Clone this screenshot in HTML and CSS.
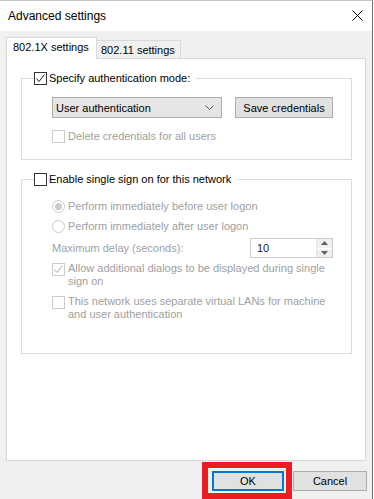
FILE: index.html
```html
<!DOCTYPE html>
<html lang="en">
<head>
    <meta charset="UTF-8">
    <title>Advanced settings</title>
    <link rel="stylesheet" href="styles.css">
</head>
<body>
    <div class="window">
        <div class="titlebar">
            <span class="title">Advanced settings</span>
            <svg class="close" width="11" height="11" viewBox="0 0 11 11">
                <path d="M0.5 0.5 L10.5 10.5 M10.5 0.5 L0.5 10.5" stroke="#000" stroke-width="1" fill="none"/>
            </svg>
        </div>
        <div class="content">
            <div class="tabs">
                <div class="tab active">802.1X settings</div>
                <div class="tab">802.11 settings</div>
            </div>
            <div class="panel">
                <fieldset class="group group-auth">
                    <legend class="legend">
                        <span class="check">
                            <svg width="11" height="11" viewBox="0 0 11 11"><path d="M1.5 5.5 L4 8.5 L9.5 1.5" stroke="#222" stroke-width="1" fill="none"/></svg>
                        </span>
                        <span class="legend-text">Specify authentication mode:</span>
                    </legend>
                    <div class="row mode-row">
                        <div class="combo">
                            <span>User authentication</span>
                            <svg width="9" height="5" viewBox="0 0 9 5"><path d="M0.5 0.5 L4.5 4.5 L8.5 0.5" stroke="#555" stroke-width="1" fill="none"/></svg>
                        </div>
                        <div class="btn save">Save credentials</div>
                    </div>
                    <div class="row opt delete-row">
                        <span class="check disabled"></span>
                        <span class="label">Delete credentials for all users</span>
                    </div>
                </fieldset>

                <fieldset class="group group-sso">
                    <legend class="legend">
                        <span class="check"></span>
                        <span class="legend-text">Enable single sign on for this network</span>
                    </legend>
                    <div class="row opt radio-first">
                        <span class="radio selected"></span>
                        <span class="label">Perform immediately before user logon</span>
                    </div>
                    <div class="row opt radio-second">
                        <span class="radio"></span>
                        <span class="label">Perform immediately after user logon</span>
                    </div>
                    <div class="row delay-row">
                        <span class="label">Maximum delay (seconds):</span>
                        <div class="spin">
                            <span class="spin-value">10</span>
                            <div class="spin-arrows">
                                <span class="arrow"><svg width="7" height="4" viewBox="0 0 7 4"><path d="M0 4 L3.5 0 L7 4 Z" fill="#606060"/></svg></span>
                                <span class="arrow"><svg width="7" height="4" viewBox="0 0 7 4"><path d="M0 0 L3.5 4 L7 0 Z" fill="#606060"/></svg></span>
                            </div>
                        </div>
                    </div>
                    <div class="row multi allow-row">
                        <span class="check disabled">
                            <svg width="11" height="11" viewBox="0 0 11 11"><path d="M1.5 5.5 L4 8.5 L9.5 1.5" stroke="#a8a8a8" stroke-width="1" fill="none"/></svg>
                        </span>
                        <span class="label">Allow additional dialogs to be displayed during single<br>sign on</span>
                    </div>
                    <div class="row multi vlan-row">
                        <span class="check disabled"></span>
                        <span class="label">This network uses separate virtual LANs for machine<br>and user authentication</span>
                    </div>
                </fieldset>
            </div>
            <div class="footer">
                <div class="highlight">
                    <div class="btn ok">OK</div>
                </div>
                <div class="btn cancel">Cancel</div>
            </div>
        </div>
    </div>
</body>
</html>
```

FILE: styles.css
```css
body {
    margin: 0;
    width: 374px;
    height: 499px;
    overflow: hidden;
    background: #fff;
    font-family: "Liberation Sans", Arial, sans-serif;
    font-size: 11px;
    color: #000;
}
.window {
    width: 372px;
    height: 498px;
    border-top: 1px solid #c4c4c4;
    border-right: 1px solid #6f6f6f;
    display: flex;
    flex-direction: column;
}
.titlebar {
    height: 31px;
    background: #fff;
    display: flex;
    align-items: center;
    justify-content: space-between;
    padding: 0 9px 0 8px;
}
.title {
    font-size: 12px;
}
.close {
    margin-top: -2px;
}
.content {
    flex: 1;
    background: #f0f0f0;
    padding: 6px 0 0 6px;
    display: flex;
    flex-direction: column;
}
.tabs {
    display: flex;
    align-items: flex-end;
    height: 21px;
}
.tab {
    box-sizing: border-box;
    height: 18px;
    line-height: 18px;
    border: 1px solid #d9d9d9;
    border-bottom: none;
    border-left: none;
    padding: 0 0 0 4px;
    width: 84px;
    white-space: nowrap;
    background: #f0f0f0;
}
.tab.active {
    position: relative;
    z-index: 1;
    height: 22px;
    line-height: 19px;
    width: 91px;
    margin-bottom: -1px;
    border-left: 1px solid #d9d9d9;
    padding-left: 6px;
    background: #fff;
}
.panel {
    box-sizing: border-box;
    width: 360px;
    height: 403px;
    border: 1px solid #d9d9d9;
    background: #fff;
    padding: 0 13px 0 14px;
}
.group {
    margin: 0;
    padding: 0 18px 0 30px;
    border: 1px solid #dcdcdc;
    min-width: 0;
}
.group-auth {
    margin-top: 12px;
    padding-bottom: 16px;
}
.group-sso {
    margin-top: 12px;
    padding-bottom: 32px;
}
.legend {
    display: flex;
    align-items: center;
    gap: 2px;
    height: 14px;
    margin-left: -18px;
    padding: 0 6px 0 0;
}
.legend-text {
    line-height: 14px;
    white-space: nowrap;
}
.check {
    box-sizing: border-box;
    width: 13px;
    height: 13px;
    border: 1px solid #333;
    background: #fff;
    display: flex;
    align-items: center;
    justify-content: center;
    flex: none;
}
.check.disabled {
    border-color: #cccccc;
}
.radio {
    box-sizing: border-box;
    width: 13px;
    height: 13px;
    border: 1px solid #cccccc;
    border-radius: 50%;
    background: #fff;
    display: flex;
    align-items: center;
    justify-content: center;
    flex: none;
}
.radio.selected::after {
    content: "";
    width: 7px;
    height: 7px;
    border-radius: 50%;
    background: #cccccc;
}
.row {
    display: flex;
    align-items: center;
}
.opt {
    gap: 3px;
    height: 14px;
}
.label {
    color: #a0a0a0;
    line-height: 13px;
    white-space: nowrap;
}
.mode-row {
    margin-top: 12px;
    gap: 13px;
}
.combo {
    box-sizing: border-box;
    width: 180px;
    height: 21px;
    background: #e5e5e5;
    border: 1px solid #acacac;
    display: flex;
    align-items: center;
    justify-content: space-between;
    padding: 0 7px 0 3px;
}
.btn {
    box-sizing: border-box;
    height: 21px;
    background: #e1e1e1;
    border: 1px solid #adadad;
    display: flex;
    align-items: center;
    justify-content: center;
}
.save {
    width: 104px;
}
.delete-row {
    margin-top: 11px;
}
.radio-first {
    margin-top: 13px;
}
.radio-second {
    margin-top: 6px;
}
.delay-row {
    margin-top: 5px;
    height: 20px;
    justify-content: space-between;
}
.spin {
    box-sizing: border-box;
    width: 83px;
    height: 20px;
    border: 1px solid #cccccc;
    display: flex;
    align-items: stretch;
    justify-content: space-between;
}
.spin-value {
    padding-left: 6px;
    line-height: 18px;
    color: #222;
}
.spin-arrows {
    width: 15px;
    display: flex;
    flex-direction: column;
    border-left: 1px solid #e6e6e6;
}
.arrow {
    flex: 1;
    display: flex;
    align-items: center;
    justify-content: center;
    background: #f0f0f0;
}
.arrow + .arrow {
    border-top: 1px solid #fff;
}
.multi {
    align-items: flex-start;
    gap: 3px;
}
.multi .check {
    margin-top: 1px;
}
.allow-row {
    margin-top: 4px;
}
.vlan-row {
    margin-top: 7px;
}
.footer {
    display: flex;
    justify-content: flex-end;
    align-items: flex-start;
    gap: 1px;
    padding: 1px 5px 0 0;
    margin-left: -6px;
}
.highlight {
    box-sizing: border-box;
    width: 90px;
    height: 37px;
    border: 6px solid #ed1c24;
    padding: 3px 2px 0 4px;
}
.ok {
    width: 72px;
    height: 20px;
    border: 2px solid #0078d7;
}
.cancel {
    width: 74px;
    height: 20px;
    margin-top: 9px;
}
```
